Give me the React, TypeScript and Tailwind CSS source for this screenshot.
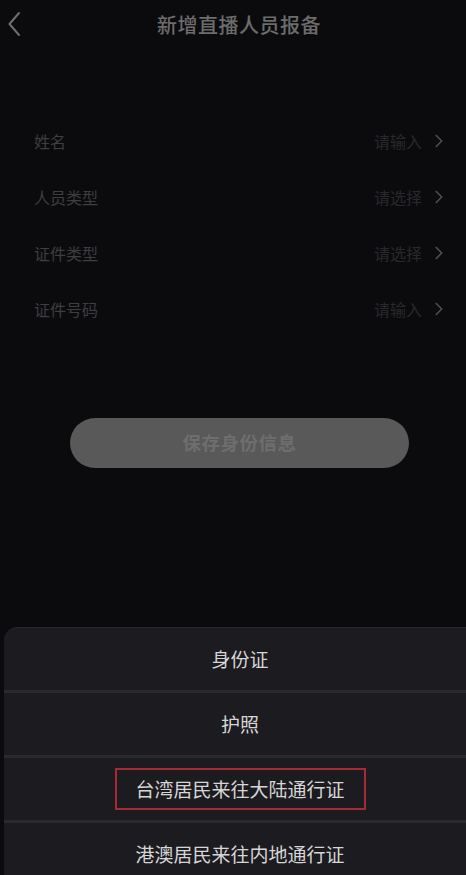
import { ChevronRight } from 'lucide-react';

const rows = [
  { label: '姓名', hint: '请输入' },
  { label: '人员类型', hint: '请选择' },
  { label: '证件类型', hint: '请选择' },
  { label: '证件号码', hint: '请输入' },
];

const options = ['身份证', '护照', '台湾居民来往大陆通行证', '港澳居民来往内地通行证'];

export default function App() {
  return (
    <div
      className="relative h-[875px] w-[466px] overflow-hidden bg-[#0b0b0e]"
      style={{ fontFamily: "'Noto Sans CJK SC', 'Noto Sans', sans-serif" }}
    >
      {/* header */}
      <div className="relative flex h-[50px] items-center justify-center">
        <svg className="absolute left-[6px] top-[11px]" width="16" height="26" viewBox="0 0 16 26" fill="none">
          <path d="M13 2 L3.5 13 L13 24" stroke="#6e6e6e" strokeWidth="2" strokeLinecap="round" strokeLinejoin="round" />
        </svg>
        <span className="ml-[12px] text-[20px] font-medium tracking-[0.5px] text-[#6c6c6c]">新增直播人员报备</span>
      </div>

      {/* form rows */}
      <div className="mt-[63px] flex flex-col">
        {rows.map((r) => (
          <div key={r.label} className="flex h-[56px] items-center pl-[34px] pr-[16px]">
            <span className="flex-1 text-[16px] text-[#3e3e40]">{r.label}</span>
            <span className="text-[16px] text-[#29292c]">{r.hint}</span>
            <ChevronRight className="ml-[6px]" size={22} strokeWidth={1.8} color="#4e4e50" />
          </div>
        ))}
      </div>

      <button className="ml-[70px] mt-[81px] flex h-[50px] w-[339px] items-center justify-center rounded-full bg-[#595959]">
        <span className="text-[18.5px] font-bold tracking-[0.5px] text-[#6e6e6e]">保存身份信息</span>
      </button>

      {/* bottom sheet */}
      <div className="absolute left-[4px] top-[627px] w-[480px] rounded-t-[14px] border-t border-[#28272c] bg-[#1c1b20]">
        {options.map((o, i) => (
          <div key={o} className={i < options.length - 1 ? 'border-b-[3px] border-[#2a292e]' : ''}>
            <div className="flex h-[62px] items-center justify-center pr-[8px]">
              {i === 2 ? (
                <span className="flex h-[42px] w-[251px] items-center justify-center border-2 border-[#a82a35] text-[19px] text-[#d6d6d6]">
                  {o}
                </span>
              ) : (
                <span className="text-[19px] text-[#d6d6d6]">{o}</span>
              )}
            </div>
          </div>
        ))}
      </div>
    </div>
  );
}
